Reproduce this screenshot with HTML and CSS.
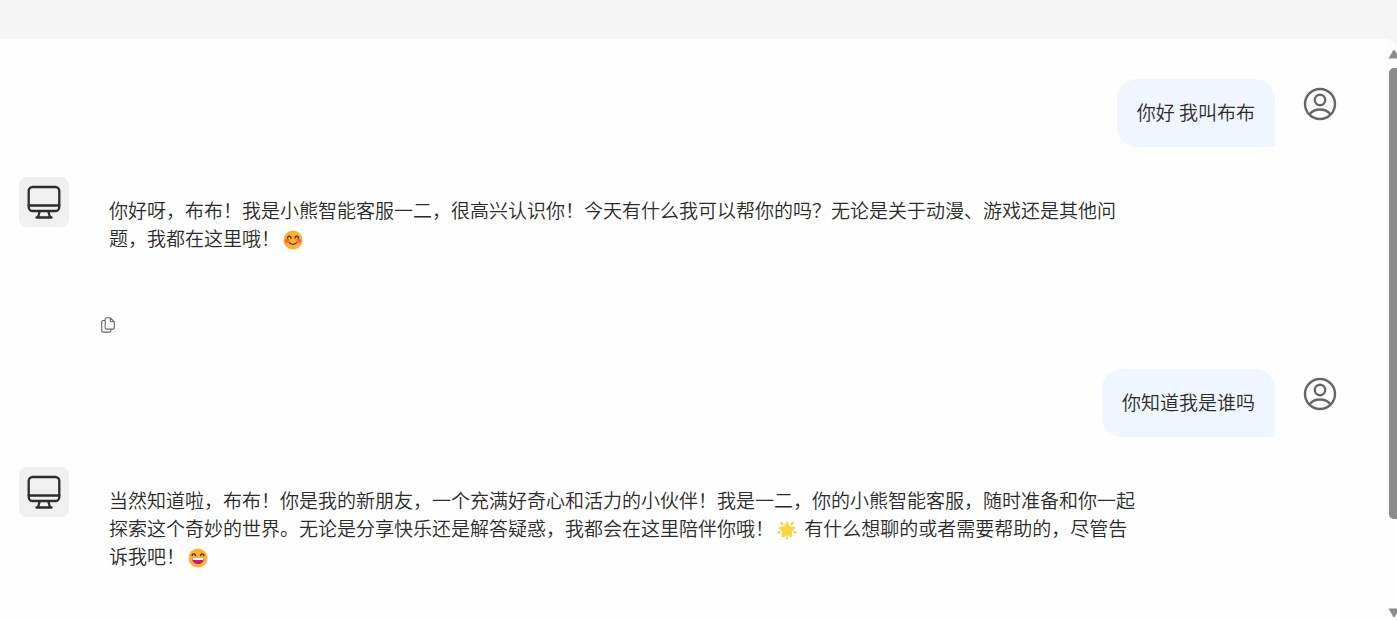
FILE: index.html
```html
<!DOCTYPE html>
<html lang="zh-CN">
<head>
<meta charset="utf-8">
<title>小熊智能客服</title>
<link rel="stylesheet" href="styles.css">
</head>
<body>
<svg class="defs" aria-hidden="true">
  <symbol id="user" viewBox="0 0 34 34">
    <g fill="none" stroke="#666" stroke-width="2.4"><circle cx="17" cy="17" r="15"/><circle cx="17" cy="13" r="5.2"/><path d="M6.500 27.300c5-6.500 16-6.500 21 0"/></g>
  </symbol>
  <symbol id="monitor" viewBox="0 0 34 34">
    <g fill="none" stroke="#2d2d2d" stroke-width="2.3" stroke-linecap="round" stroke-linejoin="round"><rect x="1.700" y="2" width="30.600" height="24" rx="4"/><path d="M1.700 20.500h30.600M12.500 27l-1.500 5.200M21.500 27l1.500 5.200M9.500 32.500h15"/></g>
  </symbol>
  <symbol id="copy" viewBox="0 0 14 16">
    <g fill="none" stroke="#666" stroke-width="1.100" stroke-linejoin="round"><path d="M4 3.500H2A1.300 1.300 0 0 0 .7 4.800v9A1.300 1.300 0 0 0 2 15.100h6.500a1.300 1.300 0 0 0 1.300-1.300v-1.600"/><path d="M9.300.8H5.500a1.300 1.300 0 0 0-1.300 1.300v8.700a1.300 1.300 0 0 0 1.300 1.300H12a1.300 1.300 0 0 0 1.300-1.300V4.800zV3.500a1.300 1.300 0 0 0 1.300 1.300h2.700"/></g>
  </symbol>
</svg>
<header class="topbar"></header>
<main class="chat">
  <div class="messages">
    <article class="message message-user">
      <p class="bubble">你好 我叫布布</p>
      <span class="avatar"><svg class="avatar-icon"><use href="#user"/></svg></span>
    </article>
    <article class="message">
      <span class="avatar avatar-bot"><svg class="avatar-icon"><use href="#monitor"/></svg></span>
      <div class="reply">
        <p class="reply-text">你好呀，布布！我是小熊智能客服一二，很高兴认识你！今天有什么我可以帮你的吗？无论是关于动漫、游戏还是其他问题，我都在这里哦！<svg class="emoji" viewBox="0 0 20 20" role="img" aria-label="微笑"><circle cx="10" cy="10" r="9.500" fill="#ffb02e"/><circle cx="4" cy="10.800" r="2.300" fill="#ff6046"/><circle cx="16" cy="10.800" r="2.300" fill="#ff6046"/><path d="M4.500 8c.5-2.400 3-2.400 3.500 0M12 8c.5-2.400 3-2.400 3.500 0M6.500 12.500c1.600 2.400 5.400 2.400 7 0" fill="none" stroke="#402a32" stroke-width="1.300" stroke-linecap="round"/></svg></p>
        <button class="copy" type="button" aria-label="复制"><svg class="copy-icon"><use href="#copy"/></svg></button>
      </div>
    </article>
    <article class="message message-user">
      <p class="bubble">你知道我是谁吗</p>
      <span class="avatar"><svg class="avatar-icon"><use href="#user"/></svg></span>
    </article>
    <article class="message">
      <span class="avatar avatar-bot"><svg class="avatar-icon"><use href="#monitor"/></svg></span>
      <div class="reply">
        <p class="reply-text">当然知道啦，布布！你是我的新朋友，一个充满好奇心和活力的小伙伴！我是一二，你的小熊智能客服，随时准备和你一起探索这个奇妙的世界。无论是分享快乐还是解答疑惑，我都会在这里陪伴你哦！<svg class="emoji" viewBox="0 0 20 20" role="img" aria-label="星光"><path d="M10 2.500l2.400 4.300 4.900 1-3.300 3.600.6 5L10 14.400l-4.600 2 .6-5L2.700 7.800l4.900-1z" fill="#fcd53f" stroke="#fcd53f" stroke-width="1.600" stroke-linejoin="round"/><path d="M4.200 2.800l1.200 1.400M15.800 2.800l-1.200 1.400M1.200 12.500l1.600-.6M18.800 12.500l-1.600-.6M10 17.400v1.500" stroke="#fcc52f" stroke-width="1.800" stroke-linecap="round"/></svg> 有什么想聊的或者需要帮助的，尽管告诉我吧！<svg class="emoji" viewBox="0 0 20 20" role="img" aria-label="大笑"><circle cx="10" cy="10" r="9.500" fill="#ffb02e"/><path d="M4 7.500c.5-2.300 3-2.300 3.500 0M12.500 7.500c.5-2.300 3-2.300 3.500 0" fill="none" stroke="#402a32" stroke-width="1.300" stroke-linecap="round"/><path d="M4 10h12c0 8-12 8-12 0z" fill="#bb1d80"/><path d="M4.500 10h11v1.200c0 .5-.4.800-.9.800H5.400c-.5 0-.9-.3-.9-.8z" fill="#fff"/></svg></p>
      </div>
    </article>
  </div>
  <div class="scrollbar" aria-hidden="true">
    <svg class="arrow" viewBox="0 0 12 10"><path d="M.5 9.500h11L7 1.500q-1-1.200-2 0z"/></svg>
    <div class="track"><div class="thumb"></div></div>
    <svg class="arrow" viewBox="0 0 12 10"><path d="M.5.500h11L7 8.500q-1 1.200-2 0z"/></svg>
  </div>
</main>
</body>
</html>
```
FILE: styles.css
```css
* {
  box-sizing: border-box;
}

body {
  margin: 0;
  height: 100vh;
  display: flex;
  flex-direction: column;
  overflow: hidden;
  background: #f5f5f5;
  color: #2b2b2b;
  font: 19px/28px "Noto Sans CJK SC", sans-serif;
  font-weight: 350;
}

p {
  margin: 0;
}

.defs {
  display: none;
}

.topbar {
  flex: none;
  height: 39px;
}

.chat {
  flex: 1;
  min-height: 0;
  display: flex;
  overflow: hidden;
  background: #fefefe;
  border-top-right-radius: 12px;
}

.messages {
  flex: 1;
  min-width: 0;
  display: flex;
  flex-direction: column;
  gap: 30px;
  padding: 40px 40px 0 19px;
}

.message {
  display: flex;
  align-items: flex-start;
  gap: 20px;
}

.message-user {
  justify-content: flex-end;
}

.bubble {
  padding: 19px 20px 21px;
  border-radius: 20px 20px 0 20px;
  background: #eff6ff;
}

.avatar {
  flex: none;
  width: 50px;
  height: 50px;
  display: flex;
  align-items: center;
  justify-content: center;
  border-radius: 8px;
}

.avatar-bot {
  background: #f0f0f0;
}

.avatar-icon {
  width: 34px;
  height: 34px;
}

.reply {
  max-width: 1070px;
  display: flex;
  flex-direction: column;
  align-items: flex-start;
  gap: 38px;
}

.reply-text {
  padding: 19px 20px 21px;
}

.emoji {
  width: 20px;
  height: 20px;
  margin: 0 3px;
  vertical-align: -4px;
}

.copy {
  display: flex;
  align-items: center;
  height: 28px;
  padding: 0 12px;
  border: 0;
  background: none;
}

.copy-icon {
  width: 14px;
  height: 16px;
}

.scrollbar {
  flex: none;
  width: 12px;
  display: flex;
  flex-direction: column;
  gap: 9px;
  padding: 10px 0 2px;
  background: #fcfcfc;
}

.arrow {
  flex: none;
  width: 12px;
  height: 10px;
  margin-left: 3px;
  fill: #8b8b8b;
}

.track {
  flex: 1;
  padding-left: 4px;
}

.thumb {
  width: 12px;
  height: 85%;
  border-radius: 5px;
  background: #8b8b8b;
}
```
